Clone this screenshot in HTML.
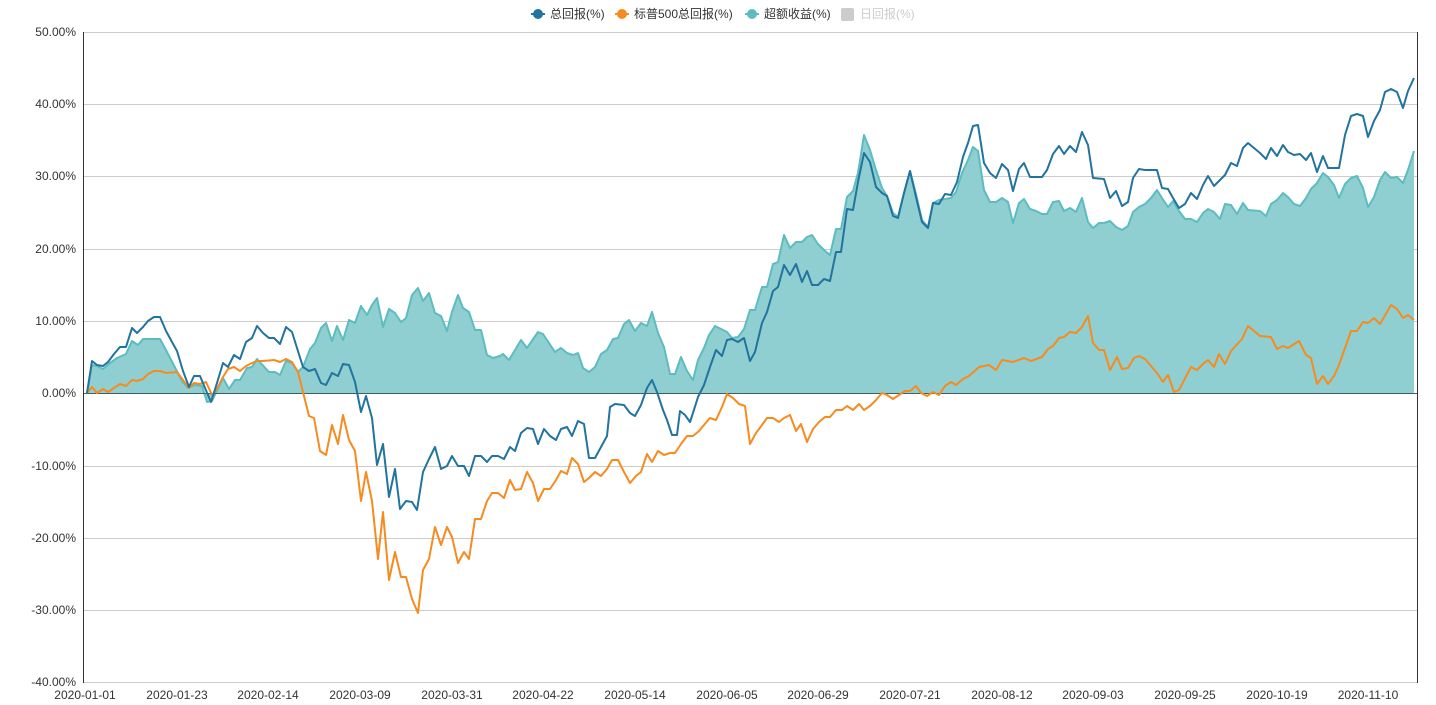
<!DOCTYPE html>
<html><head><meta charset="utf-8"><style>
html,body{margin:0;padding:0;background:#fff;width:1436px;height:705px;overflow:hidden}
svg{display:block}
text{font-family:"Liberation Sans","Noto Sans CJK SC",sans-serif;font-size:12px;fill:#333}
</style></head><body>
<svg width="1436" height="705" viewBox="0 0 1436 705">
<defs></defs>
<g stroke="#ccc" stroke-width="1">
<line x1="83" y1="32.5" x2="1417" y2="32.5"/>
<line x1="83" y1="104.5" x2="1417" y2="104.5"/>
<line x1="83" y1="176.5" x2="1417" y2="176.5"/>
<line x1="83" y1="249.5" x2="1417" y2="249.5"/>
<line x1="83" y1="321.5" x2="1417" y2="321.5"/>
<line x1="83" y1="466.5" x2="1417" y2="466.5"/>
<line x1="83" y1="538.5" x2="1417" y2="538.5"/>
<line x1="83" y1="610.5" x2="1417" y2="610.5"/>
<line x1="83" y1="682.5" x2="1417" y2="682.5"/>
</g>
<g text-anchor="end">
<text x="76" y="36">50.00%</text><text x="76" y="108">40.00%</text><text x="76" y="180">30.00%</text>
<text x="76" y="253">20.00%</text><text x="76" y="325">10.00%</text><text x="76" y="397">0.00%</text>
<text x="76" y="470">-10.00%</text><text x="76" y="542">-20.00%</text><text x="76" y="614">-30.00%</text>
<text x="76" y="686">-40.00%</text>
</g>
<g text-anchor="middle">
<text x="85" y="699">2020-01-01</text><text x="177" y="699">2020-01-23</text><text x="268" y="699">2020-02-14</text>
<text x="360" y="699">2020-03-09</text><text x="452" y="699">2020-03-31</text><text x="543" y="699">2020-04-22</text>
<text x="635" y="699">2020-05-14</text><text x="727" y="699">2020-06-05</text><text x="818" y="699">2020-06-29</text>
<text x="910" y="699">2020-07-21</text><text x="1002" y="699">2020-08-12</text><text x="1093" y="699">2020-09-03</text>
<text x="1185" y="699">2020-09-25</text><text x="1277" y="699">2020-10-19</text><text x="1368" y="699">2020-11-10</text>
</g>
<polygon fill="#8fcfd1" stroke="none" points="87,393 92,365 97,366 103,369 110,363 117,358 126,354 132,341 138,345 143,339 160,339 167,352 182,381 188,388 195,385 202,386 207,402 212,401 223,378 229,389 235,380 240,380 247,368 252,367 257,359 269,372 275,372 280,375 286,361 292,363 298,372 303,367 310,349 315,343 321,328 326,323 332,341 337,326 343,340 349,320 355,323 361,306 367,315 372,305 377,298 383,327 389,309 395,313 401,322 406,318 412,295 418,288 423,301 429,293 435,313 441,316 447,331 452,312 458,295 463,308 469,312 475,330 481,330 487,355 493,358 500,356 503,354 509,360 521,340 527,348 538,332 543,334 555,352 561,348 567,353 573,355 578,353 583,368 589,372 595,367 601,354 607,350 613,339 618,338 624,324 629,320 635,331 641,323 647,326 652,312 658,333 664,347 670,374 675,374 681,357 687,371 693,380 698,360 704,348 709,335 715,326 721,329 727,332 732,338 738,337 744,329 750,310 755,310 762,287 767,287 773,264 778,262 784,235 790,248 796,242 802,242 807,237 812,235 818,244 824,250 830,255 836,229 841,229 847,197 853,191 858,173 864,135 870,150 876,170 882,188 887,196 893,213 898,217 904,193 910,171 916,194 922,220 928,227 933,203 939,200 951,198 956,192 962,173 968,160 973,147 978,151 984,190 990,202 996,202 1002,198 1008,202 1013,223 1019,203 1024,199 1030,209 1036,211 1042,214 1047,214 1053,202 1059,201 1064,211 1070,208 1076,212 1082,198 1088,222 1093,228 1099,223 1104,223 1110,221 1116,227 1122,230 1128,226 1133,212 1139,207 1145,204 1151,198 1157,190 1162,198 1168,207 1173,201 1179,211 1185,219 1191,219 1197,222 1203,213 1208,209 1214,212 1220,219 1225,204 1231,205 1237,214 1243,203 1248,210 1260,211 1266,216 1271,204 1277,200 1283,193 1288,197 1294,204 1300,206 1306,198 1311,189 1317,183 1323,173 1328,177 1334,185 1339,198 1345,184 1351,178 1357,176 1363,188 1368,207 1374,197 1380,180 1385,172 1391,178 1397,177 1403,183 1408,170 1414,151 1414,393"/>
<polyline fill="none" stroke="#5dbcbf" stroke-width="2" stroke-linejoin="round" points="87,393 92,365 97,366 103,369 110,363 117,358 126,354 132,341 138,345 143,339 160,339 167,352 182,381 188,388 195,385 202,386 207,402 212,401 223,378 229,389 235,380 240,380 247,368 252,367 257,359 269,372 275,372 280,375 286,361 292,363 298,372 303,367 310,349 315,343 321,328 326,323 332,341 337,326 343,340 349,320 355,323 361,306 367,315 372,305 377,298 383,327 389,309 395,313 401,322 406,318 412,295 418,288 423,301 429,293 435,313 441,316 447,331 452,312 458,295 463,308 469,312 475,330 481,330 487,355 493,358 500,356 503,354 509,360 521,340 527,348 538,332 543,334 555,352 561,348 567,353 573,355 578,353 583,368 589,372 595,367 601,354 607,350 613,339 618,338 624,324 629,320 635,331 641,323 647,326 652,312 658,333 664,347 670,374 675,374 681,357 687,371 693,380 698,360 704,348 709,335 715,326 721,329 727,332 732,338 738,337 744,329 750,310 755,310 762,287 767,287 773,264 778,262 784,235 790,248 796,242 802,242 807,237 812,235 818,244 824,250 830,255 836,229 841,229 847,197 853,191 858,173 864,135 870,150 876,170 882,188 887,196 893,213 898,217 904,193 910,171 916,194 922,220 928,227 933,203 939,200 951,198 956,192 962,173 968,160 973,147 978,151 984,190 990,202 996,202 1002,198 1008,202 1013,223 1019,203 1024,199 1030,209 1036,211 1042,214 1047,214 1053,202 1059,201 1064,211 1070,208 1076,212 1082,198 1088,222 1093,228 1099,223 1104,223 1110,221 1116,227 1122,230 1128,226 1133,212 1139,207 1145,204 1151,198 1157,190 1162,198 1168,207 1173,201 1179,211 1185,219 1191,219 1197,222 1203,213 1208,209 1214,212 1220,219 1225,204 1231,205 1237,214 1243,203 1248,210 1260,211 1266,216 1271,204 1277,200 1283,193 1288,197 1294,204 1300,206 1306,198 1311,189 1317,183 1323,173 1328,177 1334,185 1339,198 1345,184 1351,178 1357,176 1363,188 1368,207 1374,197 1380,180 1385,172 1391,178 1397,177 1403,183 1408,170 1414,151"/>
<line x1="83" y1="393.5" x2="1417" y2="393.5" stroke="#3f5d62" stroke-width="1"/>
<line x1="83.5" y1="32" x2="83.5" y2="683" stroke="#333" stroke-width="1"/>
<line x1="1417.5" y1="32" x2="1417.5" y2="683" stroke="#333" stroke-width="1"/>
<polyline fill="none" stroke="#f68b1f" stroke-width="2" stroke-linejoin="round" points="87,393 92,387 97,393 103,389 108,392 114,388 120,384 126,386 132,380 137,381 143,379 148,374 154,371 160,371 166,373 177,372 183,380 189,388 194,383 200,384 206,382 212,395 217,389 223,377 228,369 234,367 240,371 246,366 252,363 257,361 263,361 274,360 280,362 286,359 292,362 298,372 303,392 309,416 314,418 320,451 326,455 332,425 338,444 343,415 349,440 355,451 361,501 366,472 372,501 378,559 383,512 389,580 395,552 401,577 406,577 412,599 418,613 423,570 429,559 435,527 441,545 447,527 452,537 458,563 464,552 469,559 475,519 481,519 487,501 492,493 498,493 504,498 510,480 515,490 521,489 527,472 533,483 538,501 544,489 550,489 556,480 561,471 567,474 572,458 578,464 584,482 589,478 595,472 601,476 607,469 612,460 618,460 624,472 630,483 636,476 641,472 647,454 652,462 658,451 664,455 670,453 675,453 681,444 687,436 693,436 699,431 704,425 710,418 716,420 722,407 727,394 733,398 739,404 745,406 750,444 756,433 762,425 767,418 773,418 779,422 784,418 790,415 796,431 801,424 807,442 813,429 819,422 825,417 830,417 836,410 842,410 847,406 853,410 859,404 864,410 870,406 876,400 882,393 887,395 893,399 899,395 905,391 910,391 916,386 921,393 927,396 933,392 939,395 945,386 951,382 956,385 963,379 969,376 979,367 989,365 996,370 1002,360 1013,362 1024,358 1031,361 1042,357 1048,349 1053,346 1059,338 1064,337 1070,332 1076,333 1082,327 1088,316 1093,343 1099,350 1104,350 1110,370 1117,357 1122,369 1128,368 1134,358 1139,356 1145,359 1151,366 1157,373 1163,382 1168,375 1174,392 1179,390 1191,367 1197,370 1203,364 1208,360 1214,367 1219,354 1225,364 1231,351 1242,339 1248,326 1260,336 1271,337 1277,349 1283,346 1288,348 1299,341 1306,355 1311,358 1317,384 1323,376 1328,384 1334,376 1339,365 1345,348 1351,331 1357,331 1363,322 1368,323 1374,318 1380,324 1391,305 1397,309 1403,318 1408,315 1414,320"/>
<polyline fill="none" stroke="#22739e" stroke-width="2" stroke-linejoin="round" points="87,393 92,361 97,365 103,366 108,362 114,354 120,347 126,347 132,328 137,333 143,327 148,321 154,317 160,317 166,331 172,342 177,351 183,371 189,387 194,376 200,376 205,388 211,402 217,383 223,363 228,367 234,355 240,359 246,342 252,338 257,326 263,333 269,338 274,338 280,344 286,327 292,332 297,348 303,367 309,371 315,369 321,383 326,385 332,373 338,376 343,364 349,365 355,382 361,412 366,396 372,418 377,465 383,444 389,497 395,469 400,509 406,501 412,502 417,510 423,472 429,459 435,447 441,469 447,466 452,456 458,466 464,466 469,476 475,456 481,456 487,462 492,456 498,456 504,459 510,447 515,451 521,433 527,428 533,429 538,444 544,429 550,436 556,440 561,429 567,427 572,436 578,421 584,424 589,458 595,458 601,447 607,436 610,407 615,404 624,405 630,413 635,416 641,405 647,388 652,380 657,392 663,410 667,420 672,435 677,435 680,411 685,415 690,422 693,413 698,397 704,385 710,367 716,350 722,356 727,340 732,339 738,342 744,338 750,361 755,352 762,323 767,312 773,291 778,287 784,265 790,275 796,264 802,282 807,271 812,285 818,285 824,279 830,281 836,252 841,252 847,209 853,210 858,182 864,153 870,162 876,187 882,193 887,196 893,216 898,218 904,193 910,171 916,197 922,222 928,228 933,203 939,204 945,194 951,195 957,182 963,157 968,143 973,126 978,125 984,163 990,173 996,178 1002,164 1008,170 1013,191 1019,169 1024,163 1030,177 1042,177 1047,170 1053,154 1059,146 1064,154 1070,146 1076,152 1082,132 1088,145 1093,178 1104,179 1110,198 1116,191 1122,206 1128,202 1133,178 1139,169 1145,170 1157,170 1162,188 1168,189 1173,198 1179,208 1185,204 1191,193 1197,199 1203,185 1208,176 1214,186 1220,180 1225,175 1231,163 1237,166 1243,148 1248,143 1254,148 1260,153 1266,159 1271,148 1277,156 1283,145 1288,152 1294,155 1300,154 1306,160 1311,153 1317,172 1323,156 1328,168 1339,168 1345,135 1351,116 1357,114 1363,116 1368,137 1374,121 1380,110 1385,92 1391,89 1397,92 1403,108 1408,91 1414,78"/>
<g>
<line x1="531" y1="14" x2="545" y2="14" stroke="#22739e" stroke-width="2"/><circle cx="538" cy="14" r="5" fill="#22739e"/>
<text x="550" y="18">总回报(%)</text>
<line x1="615" y1="14" x2="629" y2="14" stroke="#f68b1f" stroke-width="2"/><circle cx="622" cy="14" r="5" fill="#f68b1f"/>
<text x="634" y="18">标普500总回报(%)</text>
<line x1="745" y1="14" x2="759" y2="14" stroke="#5dbcbf" stroke-width="2"/><circle cx="752" cy="14" r="5" fill="#5dbcbf"/>
<text x="764" y="18">超额收益(%)</text>
<rect x="841" y="8" width="13" height="13" rx="2" fill="#ccc"/>
<text x="860" y="18" style="fill:#ccc">日回报(%)</text>
</g>
</svg>
</body></html>
